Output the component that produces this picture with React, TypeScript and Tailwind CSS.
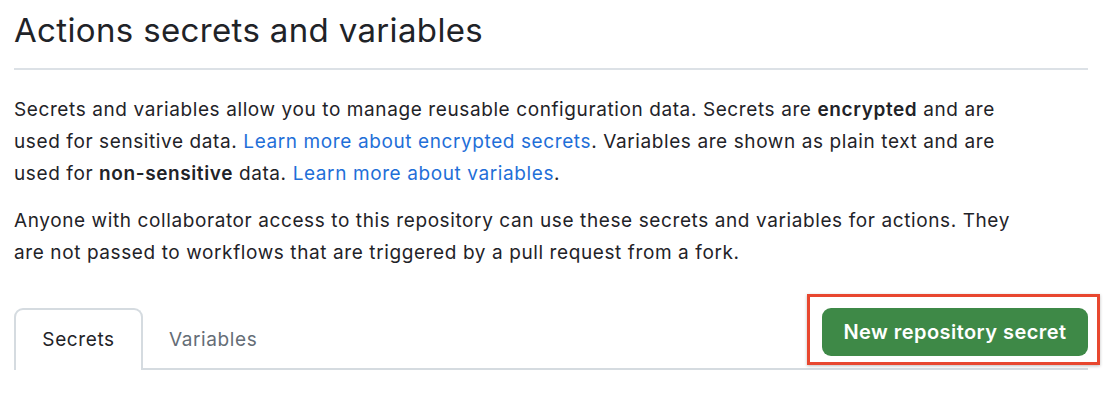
import React from 'react'

const App = () => {
  return (
    <main
      className="w-[1116px] h-[410px] bg-white pl-[14px] pr-[28px] text-[#1f2328] tracking-[0.6px]"
      style={{ fontFamily: 'Inter, "Noto Sans", sans-serif' }}
    >
      <div className="pt-[10px] pb-[17px] border-b-2 border-[#dce1e6]">
        <h1 className="text-[33px] leading-[41px] font-normal tracking-[0.35px]">
          Actions secrets and variables
        </h1>
      </div>

      <p className="mt-[24px] text-[19px] leading-[32px]">
        Secrets and variables allow you to manage reusable configuration data. Secrets are{' '}
        <b className="font-semibold">encrypted</b> and are
        <br />
        used for sensitive data.{' '}
        <a className="text-[#1f6fd8]">Learn more about encrypted secrets</a>. Variables are shown
        as plain text and are
        <br />
        used for <b className="font-semibold">non-sensitive</b> data.{' '}
        <a className="text-[#1f6fd8]">Learn more about variables</a>.
      </p>

      <p className="mt-[15px] text-[19px] leading-[32px]">
        Anyone with collaborator access to this repository can use these secrets and variables for
        actions. They
        <br />
        are not passed to workflows that are triggered by a pull request from a fork.
      </p>

      <div className="mt-[39px] flex items-start justify-between border-b-2 border-[#d5dbe0]">
        <div className="flex items-end -mb-[2px]">
          <div className="h-[62px] w-[129px] flex items-center justify-center border-2 border-b-0 border-[#d5dbe0] rounded-t-[9px] bg-white text-[19px]">
            Secrets
          </div>
          <div className="h-[60px] px-[26px] flex items-center text-[19px] text-[#656d76]">
            Variables
          </div>
        </div>
        <div className="relative">
          <button className="h-[48px] w-[266px] flex items-center justify-center rounded-[9px] bg-[#3e8947] text-white text-[20px] font-semibold tracking-[0.45px]">
            New repository secret
          </button>
          <div className="absolute -left-[15px] -right-[12px] -top-[14px] -bottom-[9px] border-[3px] border-[#e8472f] shadow-[0_1px_3px_rgba(0,0,0,0.25)] pointer-events-none" />
        </div>
      </div>
    </main>
  )
}

export default App
